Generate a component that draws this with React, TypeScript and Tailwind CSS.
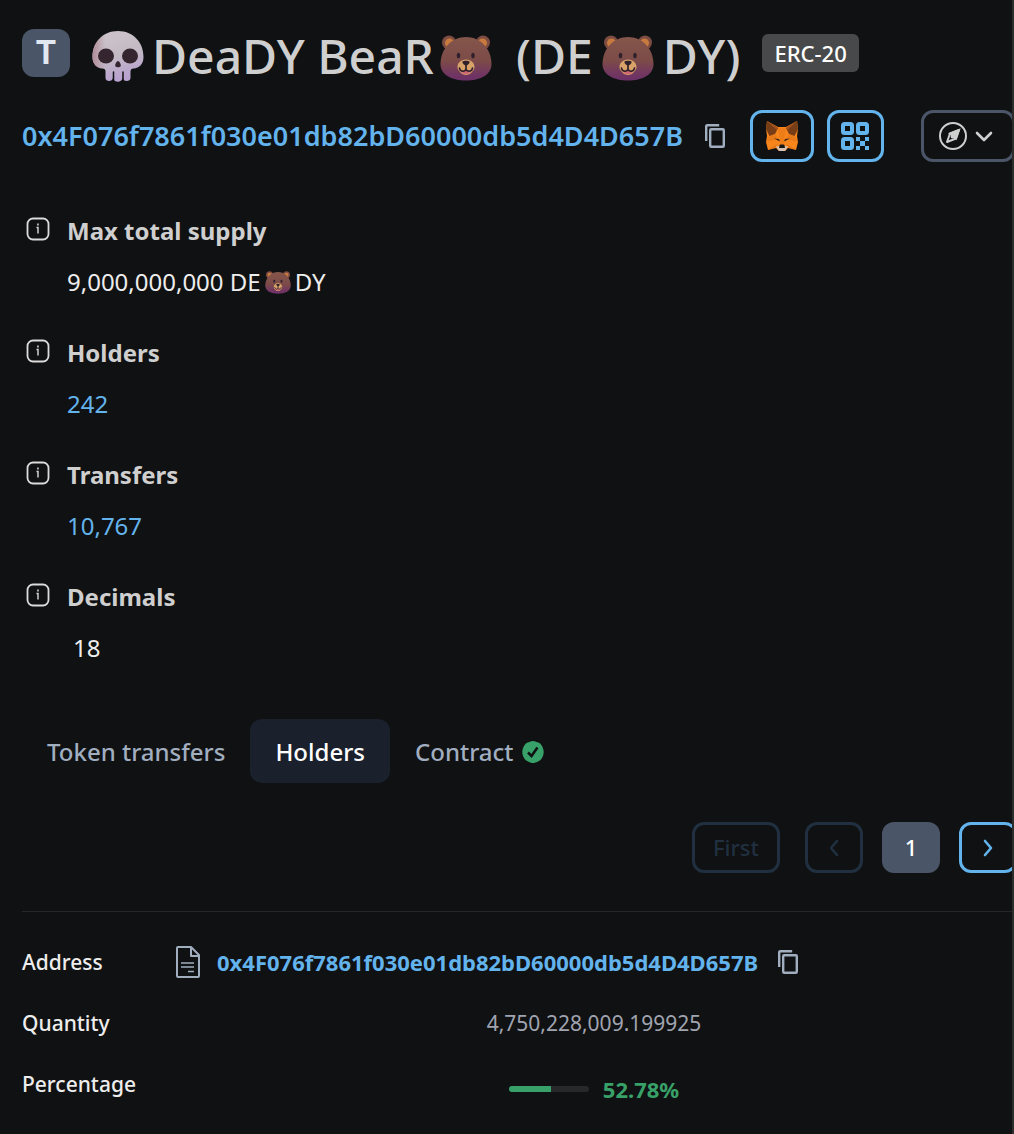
import React from "react";

interface IconProps {
    className?: string;
}

const ADDRESS = "0x4F076f7861f030e01db82bD60000db5d4D4D657B";

const Skull: React.FC<IconProps> = ({ className }) => (
    <svg viewBox="0 0 52 52" className={className} role="img" aria-label="skull">
        <defs>
            <linearGradient id="skullTop" x1="0" y1="0" x2="0.3" y2="1">
                <stop offset="0" stopColor="#cfc6cc" />
                <stop offset="0.6" stopColor="#c3b9c4" />
                <stop offset="1" stopColor="#b9a2d0" />
            </linearGradient>
            <linearGradient id="skullLeft" x1="0" y1="0" x2="1" y2="0">
                <stop offset="0" stopColor="#b08c98" />
                <stop offset="0.5" stopColor="#b08c98" stopOpacity="0" />
            </linearGradient>
        </defs>
        <path
            d="M26 1C11 1 .5 12 .5 27c0 7 4 11 10 11.500 2 .2 3 1 3 3V48c0 4 7 4 7.500 0 .5 5 9 5 9.500 0 .5 4 8 4 8 0v-6.500c0-2 1-2.800 3-3 6-.5 10-4.500 10-11.500C51.500 12 41 1 26 1Z"
            fill="url(#skullTop)"
        />
        <path d="M26 1C11 1 .5 12 .5 27c0 7 4 11 10 11.500H26Z" fill="url(#skullLeft)" />
        <path d="M21.500 42v9M31 42v9" stroke="#101112" strokeWidth="1.500" strokeLinecap="round" />
        <ellipse cx="14" cy="26" rx="8" ry="7.500" fill="#35252f" />
        <ellipse cx="38" cy="26" rx="8" ry="7.500" fill="#35252f" />
        <path d="M26 31c-1.500 0-3.500 4-2.500 5.500 1 1 4 1 5 0C29.500 35 27.500 31 26 31Z" fill="#35252f" />
    </svg>
);

const Bear: React.FC<IconProps> = ({ className }) => (
    <svg viewBox="0 0 52 46" className={className} role="img" aria-label="bear">
        <defs>
            <linearGradient id="bearFace" x1="0" y1="0" x2="0" y2="1">
                <stop offset="0" stopColor="#85564b" />
                <stop offset="0.55" stopColor="#7c4b48" />
                <stop offset="0.85" stopColor="#713661" />
                <stop offset="1" stopColor="#6c3068" />
            </linearGradient>
        </defs>
        <circle cx="9" cy="7.500" r="7" fill="#7d4c42" />
        <circle cx="43" cy="7.500" r="7" fill="#7d4c42" />
        <circle cx="9.500" cy="8" r="4.500" fill="#c97b3e" />
        <circle cx="42.500" cy="8" r="4.500" fill="#c97b3e" />
        <path
            d="M26 2C12 2 1 13 .5 28.500.2 40 12 45.500 26 45.500S51.800 40 51.500 28.500C51 13 40 2 26 2Z"
            fill="url(#bearFace)"
        />
        <ellipse cx="18.500" cy="20.500" rx="1.800" ry="2.800" fill="#30202b" />
        <ellipse cx="33" cy="20.500" rx="1.800" ry="2.800" fill="#30202b" />
        <path d="M26 24.500c-5.500 0-8.500 4-8.500 7.500 0 3 2 4 3 5.500 2 3.300 9 3.300 11 0 1-1.500 3-2.500 3-5.500 0-3.500-3-7.500-8.500-7.500Z" fill="#d9a268" />
        <path d="M20.500 34c1 3 4 2.500 5.500.3 1.500 2.200 4.500 2.700 5.500-.3 0 7-11 7-11 0Z" fill="#cf6672" />
        <path d="M19.500 33c.5 4 5 4 6.500 1.500 1.500 2.500 6 2.500 6.500-1.500M26 29v5" fill="none" stroke="#30202b" strokeWidth="1.700" strokeLinecap="round" />
        <path d="M22.500 26.500c1-1 6-1 7 0 .6 1.500-2 4-3.500 4s-4.100-2.500-3.500-4Z" fill="#30202b" />
    </svg>
);

const Fox: React.FC = () => (
    <svg viewBox="0 0 32 30" className="h-[30px] w-8" aria-hidden="true">
        <path d="M1 0 12 6h8L31 0l1 8-1 7 1 6-2 8-8-2-3 3h-6l-3-3-8 2-2-8 1-6L0 8Z" fill="#f6851b" />
        <path d="M1 0 12 7l-3 6-5.500 2L0 8ZM31 0 20 7l3 6 5.500 2L32 8Z" fill="#763d16" />
        <path d="M1 0 12 7l-1.500 2ZM31 0 20 7l1.500 2Z" fill="#a4501c" />
        <path d="m2.500 16 6.500-3 3 5-11 3ZM29.500 16 23 13l-3 5 11 3Z" fill="#e97a1a" />
        <path d="M12 7h8l-2.500 16h-3Z" fill="#ee7d18" />
        <path d="m8 17.500 5 .5 1 2.500ZM24 17.500l-5 .5-1 2.500Z" fill="#3b241b" />
        <path d="m2 29 7-3 3-3ZM30 29l-7-3-3-3Z" fill="#d96c17" />
        <path d="m10 25.500 3-.5h6l3 .5-3 4.500h-6Z" fill="#d7c1b3" />
        <path d="m13.500 24.500.5-1h4l.5 1 .5 2.500h-6Z" fill="#161616" />
    </svg>
);

const QrIcon: React.FC = () => (
    <svg viewBox="0 0 28 28" className="size-7" fill="none" aria-hidden="true">
        <g stroke="currentColor" strokeWidth="4">
            <rect x="2" y="2" width="9" height="9" rx="1.500" />
            <rect x="17" y="2" width="9" height="9" rx="1.500" />
            <rect x="2" y="17" width="9" height="9" rx="1.500" />
        </g>
        <path
            d="M15 15h4v4h-4zM24 15h4v4h-4zM19 19h5v5h-5zM15 24h4v4h-4zM24 24h4v4h-4z"
            fill="currentColor"
        />
    </svg>
);

const CopyIcon: React.FC = () => (
    <svg viewBox="0 0 20 24" className="h-6 w-5" fill="none" stroke="currentColor" strokeWidth="2.400" aria-hidden="true">
        <path d="M1.200 17V2a1 1 0 0 1 1-.8h12" />
        <rect x="5.200" y="5.200" width="13.600" height="17.600" rx="1" />
    </svg>
);

const InfoIcon: React.FC = () => (
    <svg viewBox="0 0 24 24" className="mt-0.5 size-6 shrink-0" fill="none" stroke="#dcdcdc" strokeWidth="1.800" aria-hidden="true">
        <rect x="1.500" y="1.500" width="21" height="21" rx="5.500" />
        <path d="M10.500 10.500H12V16.500" strokeWidth="1.400" />
        <path d="M11.200 7.500h1.500" />
    </svg>
);

const FileIcon: React.FC = () => (
    <svg viewBox="0 0 24 32" className="h-8 w-6 shrink-0 text-[#a0aec0]" fill="none" stroke="currentColor" strokeWidth="2" strokeLinejoin="round" aria-hidden="true">
        <path d="M2 1h13l8 8v21a1 1 0 0 1-1 1H2a1 1 0 0 1-1-1V2a1 1 0 0 1 1-1Z" />
        <path d="M15 1v9h8" />
        <path d="M5 17h13M5 21h13M12 25.500h6" strokeWidth="1.600" />
    </svg>
);

const CompassIcon: React.FC = () => (
    <svg viewBox="0 0 28 28" className="size-7" fill="none" stroke="currentColor" strokeWidth="2" aria-hidden="true">
        <circle cx="14" cy="14" r="13" />
        <path d="M20 8 17 16.500 8 20l3-8.500Z" strokeLinejoin="round" />
        <path d="M20 8 17 16.500 14 14l-3-2.500Z" fill="currentColor" />
        <circle cx="13.500" cy="14.500" r="1" />
    </svg>
);

const Verified: React.FC = () => (
    <svg viewBox="0 0 22 22" className="size-[22px]" aria-label="verified" role="img">
        <path
            d="M11 0c2 0 3 .8 4.500 1.300 2 .7 3.500 1.700 4.500 3.700.8 1.500 1.700 3.500 1.700 6s-.9 4.500-1.700 6c-1 2-2.500 3-4.500 3.700-1.500.5-2.500 1.300-4.500 1.300s-3-.8-4.500-1.300C4.500 20 3 19 2 17 1.200 15.500.3 13.500.3 11S1.200 6.500 2 5c1-2 2.500-3 4.500-3.700C8 .8 9 0 11 0Z"
            fill="#38a169"
        />
        <path d="m6 11.500 3.500 3.500 6-8.500" fill="none" stroke="#101112" strokeWidth="2.600" />
    </svg>
);

interface ChevronProps {
    d: string;
}

const Chevron: React.FC<ChevronProps> = ({ d }) => (
    <svg viewBox="0 0 18 18" className="size-[18px]" fill="none" stroke="currentColor" strokeWidth="2.600" strokeLinecap="round" strokeLinejoin="round" aria-hidden="true">
        <path d={d} />
    </svg>
);

interface DetailProps {
    label: string;
    children: React.ReactNode;
}

const Detail: React.FC<DetailProps> = ({ label, children }) => (
    <div className="flex gap-[17px]">
        <InfoIcon />
        <dl>
            <dt className="text-2xl leading-8 font-bold text-[#cfcfcf]">{label}</dt>
            <dd className="mt-[19px] text-2xl leading-8 text-[#ededed]">{children}</dd>
        </dl>
    </div>
);

const App: React.FC = () => {
    const percentage = 52.78;
    return (
        <main className="min-h-screen overflow-hidden border-r-2 border-[#2d2d2d] bg-[#101112] pt-7 pl-[22px] font-['Noto_Sans',sans-serif]">
            <header className="flex items-start whitespace-nowrap">
                <span className="mt-px flex size-12 shrink-0 items-center justify-center rounded-xl bg-[#4a5568] font-['Inter',sans-serif] text-[32px] font-bold text-[#e2e8f0]">
                    T
                </span>
                <h1 className="ml-[22px] flex items-center text-5xl leading-14 font-medium text-[#cfcfcf]">
                    <Skull className="mr-2 size-[52px]" />
                    DeaDY BeaR
                    <Bear className="mt-1 ml-1.5 mr-6 h-[46px] w-[52px]" />
                    (DE
                    <Bear className="mx-[9px] mt-1 h-[46px] w-[52px]" />
                    DY)
                </h1>
                <span className="mt-1.5 ml-[22px] rounded-md bg-[#48494a] px-3 py-1 text-[22px] leading-[30px] font-medium text-white">ERC-20</span>
            </header>

            <div className="mt-[26px] flex items-center whitespace-nowrap">
                <a href="#address" className="text-[27px] leading-9 font-semibold text-[#63b3ed]">
                    {ADDRESS}
                </a>
                <button aria-label="Copy address" className="ml-[22px] text-[#a0aec0]">
                    <CopyIcon />
                </button>
                <button aria-label="Add token to wallet" className="ml-[25px] flex h-[52px] w-16 shrink-0 items-center justify-center rounded-xl border-3 border-[#63b3ed]">
                    <Fox />
                </button>
                <button aria-label="Show QR code" className="ml-[13px] flex h-[52px] w-[57px] shrink-0 items-center justify-center rounded-xl border-3 border-[#63b3ed] text-[#63b3ed]">
                    <QrIcon />
                </button>
                <button aria-label="Open in explorer" className="ml-[37px] flex h-[52px] w-[94px] shrink-0 items-center gap-2 rounded-xl border-3 border-[#4a5568] pl-[15px] text-[#cfcfcf]">
                    <CompassIcon />
                    <Chevron d="M2 6l7 7 7-7" />
                </button>
            </div>

            <section className="mt-[53px] flex flex-col gap-[39px] pl-1">
                <Detail label="Max total supply">
                    <span className="flex items-center">
                        9,000,000,000 DE
                        <Bear className="mx-1 h-[23px] w-[26px]" />
                        DY
                    </span>
                </Detail>
                <Detail label="Holders">
                    <a href="#holders" className="text-[#63b3ed]">242</a>
                </Detail>
                <Detail label="Transfers">
                    <a href="#transfers" className="text-[#63b3ed]">10,767</a>
                </Detail>
                <Detail label="Decimals">
                    <span className="pl-1.5">18</span>
                </Detail>
            </section>

            <nav className="mt-[55px] flex text-2xl leading-8 font-medium text-[#a0aec0]">
                <button className="rounded-xl px-[25px] pt-[17px] pb-[15px]">Token transfers</button>
                <button className="rounded-xl bg-[#1a202c] px-[25px] pt-[17px] pb-[15px] text-white">Holders</button>
                <button className="flex items-center gap-2 rounded-xl px-[25px] pt-[17px] pb-[15px]">
                    Contract
                    <Verified />
                </button>
            </nav>

            <div className="mt-[39px] -mr-[5px] flex justify-end text-[22px] font-medium">
                <button disabled className="mr-[25px] h-[51px] w-22 shrink-0 rounded-xl border-3 border-[#203040] text-[#203040]">
                    First
                </button>
                <button disabled aria-label="Previous page" className="mr-[19px] flex h-[51px] w-[58px] shrink-0 items-center justify-center rounded-xl border-3 border-[#203040] text-[#203040]">
                    <Chevron d="M12 2 6 9l6 7" />
                </button>
                <button className="mr-[19px] h-[51px] w-[58px] shrink-0 rounded-xl bg-[#4a5568] text-white">1</button>
                <button aria-label="Next page" className="flex h-[51px] w-[58px] shrink-0 items-center justify-center rounded-xl border-3 border-[#63b3ed] text-[#63b3ed]">
                    <Chevron d="m6 2 6 7-6 7" />
                </button>
            </div>

            <table className="mt-[38px] w-full border-t border-[#262728] text-[21px] leading-[30px] whitespace-nowrap">
                <tbody>
                    <tr>
                        <th className="w-[154px] pt-[34px] pb-[15px] text-left font-medium text-[#ededed]">Address</th>
                        <td className="pt-[34px] pb-[15px]">
                            <div className="flex items-center text-[22px]">
                                <FileIcon />
                                <a href="#holder" className="ml-[17px] font-bold text-[#63b3ed]">{ADDRESS}</a>
                                <button aria-label="Copy holder address" className="ml-5 text-[#a0aec0]">
                                    <CopyIcon />
                                </button>
                            </div>
                        </td>
                    </tr>
                    <tr>
                        <th className="py-[15px] text-left font-medium text-[#ededed]">Quantity</th>
                        <td className="py-[15px] text-center text-[#a0a4b0]">4,750,228,009.199925</td>
                    </tr>
                    <tr>
                        <th className="pt-4 pb-3.5 text-left font-medium text-[#ededed]">Percentage</th>
                        <td className="pt-[21px] pb-[9px]">
                            <div className="flex items-center justify-center gap-3.5 text-[22px] font-bold text-[#38a169]">
                                <span className="h-1.5 w-20 overflow-hidden rounded-sm bg-[#272829]">
                                    <span className="block h-full bg-[#38a169]" style={{ width: `${percentage}%` }} />
                                </span>
                                {percentage}%
                            </div>
                        </td>
                    </tr>
                </tbody>
            </table>
        </main>
    );
};

export default App;
